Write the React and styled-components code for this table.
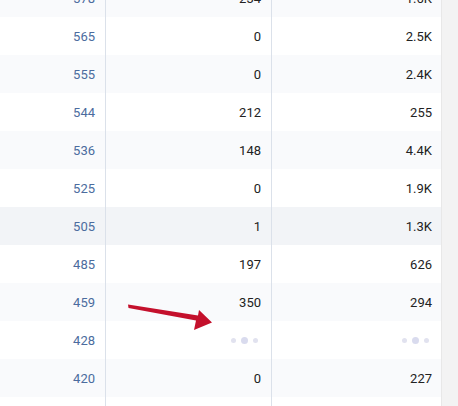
import React from "react";
import styled, { createGlobalStyle } from "styled-components";

const GlobalStyle = createGlobalStyle`
  html, body {
    margin: 0;
    padding: 0;
    background: #ffffff;
    overflow: hidden;
  }
  body {
    font-family: Roboto, "Liberation Sans", Arial, sans-serif;
  }
`;

const Page = styled.div`
  position: relative;
  display: flex;
  width: 458px;
  height: 406px;
  overflow: hidden;
`;

const Table = styled.div`
  width: 441px;
  margin-top: -21px;
  display: flex;
  flex-direction: column;
  flex-shrink: 0;
`;

const Row = styled.div`
  display: grid;
  grid-template-columns: 106px 166px 169px;
  height: 38px;
  flex-shrink: 0;
  background: ${(p) => (p.$hover ? "#f2f4f7" : p.$alt ? "#f9fafc" : "#ffffff")};
`;

const Cell = styled.div`
  display: flex;
  align-items: center;
  justify-content: flex-end;
  font-size: 13px;
  color: ${(p) => (p.$link ? "#4b6c9e" : "#222222")};
  border-right: ${(p) => (p.$last ? "none" : "1px solid #dbe1ea")};
  padding-right: ${(p) => (p.$last ? "9px" : "10px")};
`;

const Loader = styled.div`
  display: flex;
  align-items: center;
  gap: 5px;
  margin-right: 3px;
`;

const Dot = styled.span`
  width: ${(p) => (p.$big ? 7 : 5)}px;
  height: ${(p) => (p.$big ? 7 : 5)}px;
  border-radius: 50%;
  background: ${(p) => (p.$big ? "#d9dbee" : "#e1e2ef")};
`;

const Track = styled.div`
  flex: 1;
  height: 100%;
  background: #f3f3f3;
  border-left: 1px solid #e8e8e8;
  box-sizing: border-box;
`;

const Arrow = styled.svg`
  position: absolute;
  left: 0;
  top: 0;
  width: 458px;
  height: 406px;
  pointer-events: none;
`;

const rows = [
  { id: "578", a: "234", b: "1.6K" },
  { id: "565", a: "0", b: "2.5K" },
  { id: "555", a: "0", b: "2.4K" },
  { id: "544", a: "212", b: "255" },
  { id: "536", a: "148", b: "4.4K" },
  { id: "525", a: "0", b: "1.9K" },
  { id: "505", a: "1", b: "1.3K", hover: true },
  { id: "485", a: "197", b: "626" },
  { id: "459", a: "350", b: "294" },
  { id: "428", loading: true },
  { id: "420", a: "0", b: "227" },
  { id: "", a: "", b: "" },
];

function Dots() {
  return (
    <Loader>
      <Dot />
      <Dot $big />
      <Dot />
    </Loader>
  );
}

export default function App() {
  return (
    <>
      <GlobalStyle />
      <Page>
        <Table>
          {rows.map((r, i) => (
            <Row key={i} $alt={i % 2 === 0} $hover={r.hover}>
              <Cell $link>{r.id}</Cell>
              <Cell>{r.loading ? <Dots /> : r.a}</Cell>
              <Cell $last>{r.loading ? <Dots /> : r.b}</Cell>
            </Row>
          ))}
        </Table>
        <Track />
        <Arrow viewBox="0 0 458 406">
          <polygon
            points="128,304.5 198,315.5 199,310 212,322.5 194,330 196,320.5 128.5,308"
            fill="#c4102c"
          />
        </Arrow>
      </Page>
    </>
  );
}
